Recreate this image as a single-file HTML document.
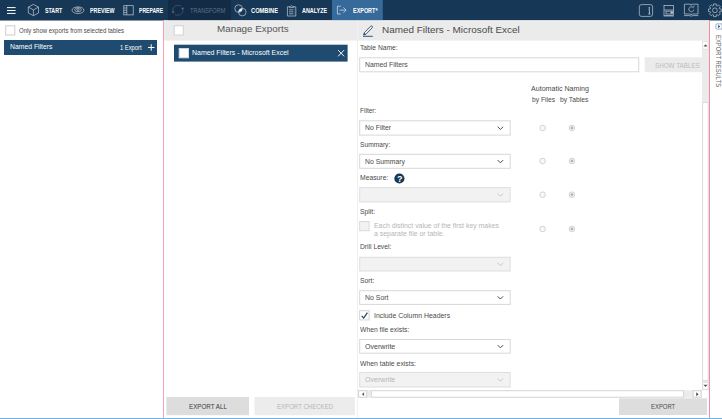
<!DOCTYPE html><html><head><meta charset="utf-8"><title>Export</title><style>
html,body{margin:0;padding:0;background:#fff;}body{width:722px;height:419px;position:relative;overflow:hidden;font-family:"Liberation Sans",sans-serif;}
.t{position:absolute;white-space:nowrap;line-height:12px;height:12px;transform-origin:0 50%;}
svg{display:block;position:absolute;left:0;top:0}
</style></head><body>
<svg width="722" height="419" viewBox="0 0 722 419">
<rect x="0" y="0" width="722.00" height="20.50" fill="#163756" />
<rect x="168" y="0" width="63.00" height="20.50" fill="#132b44" />
<rect x="332" y="0" width="50.80" height="20.50" fill="#366a9a" />
<rect x="5.70" y="25.80" width="9.10" height="9.20" fill="#fff" stroke="#cdcdcd" stroke-width="1" />
<rect x="4" y="40" width="153.00" height="15.00" fill="#204b70" />
<rect x="148" y="47" width="6.40" height="1.00" fill="#fff" />
<rect x="150.7" y="44.3" width="1.00" height="6.40" fill="#fff" />
<rect x="163" y="20.5" width="1.00" height="397.50" fill="#ff9fb5" />
<rect x="164" y="20.5" width="545.00" height="20.10" fill="#ebebeb" />
<rect x="164" y="20.5" width="545.00" height="1.00" fill="#f2f2f2" />
<rect x="174.20" y="25.80" width="9.10" height="9.20" fill="#fff" stroke="#d2d2d2" stroke-width="1" />
<rect x="174" y="44.7" width="173.60" height="16.90" fill="#204b70" />
<rect x="179.20" y="48.60" width="9.30" height="9.20" fill="#fff" stroke="#d8dde3" stroke-width="1" />
<path d="M338.1 50.1 L344.1 56.3 M344.1 50.1 L338.1 56.3" stroke="#fff" stroke-width="0.95" fill="none"/>
<rect x="166.4" y="397" width="82.60" height="18.20" fill="#dddddd" />
<rect x="254.5" y="397" width="100.30" height="18.20" fill="#ececec" />
<rect x="357" y="20.5" width="1.00" height="397.50" fill="#f0f0f0" />
<g transform="translate(362,24)"><path d="M2.2 8.8 L8.6 2.2 Q9.4 1.4 10.2 2.2 Q11 3 10.2 3.8 L3.8 10.4 L1.6 11 Z" fill="none" stroke="#1f4468" stroke-width="0.8"/><path d="M1 12.3 H10.8" stroke="#1f4468" stroke-width="0.9"/><path d="M2.4 8.8 L3.9 10.3 L1.6 11Z" fill="#1f4468"/></g>
<rect x="359.70" y="57.80" width="279.00" height="14.00" fill="#fff" stroke="#d8d8d8" stroke-width="1" />
<rect x="644.7" y="57.3" width="57.30" height="14.90" fill="#ebebeb" />
<rect x="359.70" y="120.80" width="150.50" height="14.30" fill="#fff" stroke="#d8d8d8" stroke-width="1" />
<path d="M497.70 126.75 L500.40 129.45 L503.10 126.75" fill="none" stroke="#4a4a4a" stroke-width="1"/>
<rect x="359.70" y="154.30" width="150.50" height="14.00" fill="#fff" stroke="#d8d8d8" stroke-width="1" />
<path d="M497.70 160.10 L500.40 162.80 L503.10 160.10" fill="none" stroke="#4a4a4a" stroke-width="1"/>
<rect x="359.70" y="187.60" width="150.50" height="14.30" fill="#f2f2f2" stroke="#dedede" stroke-width="1" />
<path d="M497.70 193.55 L500.40 196.25 L503.10 193.55" fill="none" stroke="#c8c8c8" stroke-width="1"/>
<rect x="359.70" y="257.30" width="150.50" height="13.70" fill="#f2f2f2" stroke="#dedede" stroke-width="1" />
<path d="M497.70 262.95 L500.40 265.65 L503.10 262.95" fill="none" stroke="#c8c8c8" stroke-width="1"/>
<rect x="359.70" y="290.70" width="150.50" height="13.70" fill="#fff" stroke="#d8d8d8" stroke-width="1" />
<path d="M497.70 296.35 L500.40 299.05 L503.10 296.35" fill="none" stroke="#4a4a4a" stroke-width="1"/>
<rect x="359.70" y="339.50" width="150.50" height="13.70" fill="#fff" stroke="#d8d8d8" stroke-width="1" />
<path d="M497.70 345.15 L500.40 347.85 L503.10 345.15" fill="none" stroke="#4a4a4a" stroke-width="1"/>
<rect x="359.70" y="372.50" width="150.50" height="14.50" fill="#f2f2f2" stroke="#dedede" stroke-width="1" />
<path d="M497.70 378.55 L500.40 381.25 L503.10 378.55" fill="none" stroke="#c8c8c8" stroke-width="1"/>
<circle cx="542.6" cy="128" r="2.8" fill="#f8f8f8" stroke="#c6c6c6" stroke-width="0.75"/>
<circle cx="571.9" cy="128" r="2.8" fill="#f8f8f8" stroke="#c6c6c6" stroke-width="0.75"/>
<circle cx="571.9" cy="128" r="1.45" fill="#b4b4b4"/>
<circle cx="542.6" cy="161" r="2.8" fill="#f8f8f8" stroke="#c6c6c6" stroke-width="0.75"/>
<circle cx="571.9" cy="161" r="2.8" fill="#f8f8f8" stroke="#c6c6c6" stroke-width="0.75"/>
<circle cx="571.9" cy="161" r="1.45" fill="#b4b4b4"/>
<circle cx="542.6" cy="194.7" r="2.8" fill="#f8f8f8" stroke="#c6c6c6" stroke-width="0.75"/>
<circle cx="571.9" cy="194.7" r="2.8" fill="#f8f8f8" stroke="#c6c6c6" stroke-width="0.75"/>
<circle cx="571.9" cy="194.7" r="1.45" fill="#b4b4b4"/>
<circle cx="542.6" cy="229" r="2.8" fill="#f8f8f8" stroke="#c6c6c6" stroke-width="0.75"/>
<circle cx="571.9" cy="229" r="2.8" fill="#f8f8f8" stroke="#c6c6c6" stroke-width="0.75"/>
<circle cx="571.9" cy="229" r="1.45" fill="#b4b4b4"/>
<circle cx="399.4" cy="178.5" r="5.1" fill="#163756"/>
<rect x="359.70" y="221.50" width="9.40" height="9.20" fill="#f2f2f2" stroke="#d9d9d9" stroke-width="1" />
<rect x="359.70" y="310.70" width="9.40" height="9.20" fill="#fff" stroke="#d2d2d2" stroke-width="1" />
<path d="M361.7 315.9 L363.7 318.1 L367.4 312.7" fill="none" stroke="#1c4066" stroke-width="1.2"/>
<rect x="702" y="40.6" width="7.00" height="349.60" fill="#ebebeb" />
<rect x="702.60" y="41.40" width="5.60" height="7.80" fill="#fff" stroke="#e2e2e2" stroke-width="1" />
<path d="M704.1 46.5 L706.1 44.3 L708.1 46.5Z" fill="#555" transform="translate(-0.6,0)"/>
<rect x="702.60" y="102.50" width="5.60" height="277.90" fill="#fff" stroke="#dcdcdc" stroke-width="1" />
<rect x="702.60" y="382.20" width="5.60" height="7.20" fill="#fff" stroke="#dcdcdc" stroke-width="1" />
<path d="M703.4 384.7 L705.5 387 L707.6 384.7Z" fill="#555"/>
<rect x="358.1" y="390.2" width="343.60" height="7.50" fill="#ececec" />
<rect x="358.60" y="390.70" width="8.10" height="6.50" fill="#fff" stroke="#d2d2d2" stroke-width="1" />
<path d="M364.1 392.3 L361.7 394.2 L364.1 396.1Z" fill="#666"/>
<rect x="371.30" y="390.70" width="312.30" height="6.50" fill="#fff" stroke="#d6d6d6" stroke-width="1" />
<rect x="693.10" y="390.70" width="8.00" height="6.50" fill="#fff" stroke="#d2d2d2" stroke-width="1" />
<path d="M696.2 392.2 L698.7 394.2 L696.2 396.2Z" fill="#555"/>
<rect x="619" y="398.3" width="88.00" height="16.70" fill="#dddddd" />
<rect x="709" y="20.5" width="1.00" height="397.50" fill="#f48ca4" />
<rect x="0" y="418" width="722.00" height="1.00" fill="#72b1e6" />
<g transform="translate(715.5,23.5)"><path d="M1.5 0.4 H6.6 V5.6 H1.5 Q0.4 5.6 0.4 4.5 V1.5 Q0.4 0.4 1.5 0.4Z" fill="none" stroke="#6d8fb3" stroke-width="0.7"/><path d="M2.6 1.6 L4.8 3 L2.6 4.4Z" fill="#1f4468"/></g>
<rect x="7" y="7.1" width="8.60" height="1.00" fill="#fff" />
<rect x="7" y="10" width="8.60" height="1.00" fill="#fff" />
<rect x="7" y="12.9" width="8.60" height="1.00" fill="#fff" />
<g fill="none" stroke="#c3ccd6" stroke-width="0.7" stroke-linejoin="round">
<path d="M33.4 4.4 L38.5 7.1 V13 L33.4 15.7 L28.3 13 V7.1 Z M28.3 7.1 L33.4 9.9 L38.5 7.1 M33.4 9.9 V15.7"/>
<ellipse cx="78" cy="10.2" rx="6" ry="3.3"/><ellipse cx="78" cy="9.7" rx="3.3" ry="2"/><ellipse cx="78" cy="9.5" rx="1.3" ry="0.9"/>
<g stroke-linejoin="miter"><rect x="123.8" y="5.7" width="9.4" height="9.2"/><path d="M126.8 5.7 V14.9 M123.8 8 H126.8 M123.8 10.3 H126.8 M123.8 12.6 H126.8"/></g>
<g stroke="#46607a"><path d="M181 6.2 A5.4 5.4 0 0 0 172.6 11.2 M174.8 14.4 A5.4 5.4 0 0 0 183.2 9.6"/><circle cx="182.6" cy="8.5" r="1.1" fill="#5b7690" stroke="none"/><circle cx="173.2" cy="12" r="0.9" fill="#46607a"/></g>
<circle cx="238.6" cy="8.6" r="3.8"/><circle cx="242.3" cy="12.1" r="3.8"/><path d="M238.9 11.6 Q239.3 9 242 8.8 Q241.8 11.4 238.9 11.6Z" fill="#fff" stroke="#fff" stroke-width="0.6"/>
<path d="M289.6 6.8 H287.4 V16 H295.8 V6.8 H293.6 M289.6 7.6 V6.4 H290.6 Q291.6 4.9 292.6 6.4 H293.6 V7.6 Z M289 9.8 H293 M289 11.8 H293 M289 13.8 H293"/><path d="M293.6 9.8 H294.4 M293.6 11.8 H294.4 M293.6 13.8 H294.4"/>
<g stroke="#dbe5ef"><path d="M340.8 6.2 H337.4 V14 H340.8 M339.6 10.1 H346 M343.4 7.4 L346.1 10.1 L343.4 12.8"/></g>
<rect x="639.3" y="4.6" width="13.3" height="11.8" rx="2.2"/><path d="M649.4 9.6 V14 M648.4 14 H650.4 M648.6 9.6 H649.4" stroke-width="0.9"/><circle cx="649.3" cy="7.9" r="0.5" fill="#c3ccd6"/>
<g stroke-linejoin="miter"><rect x="664" y="5.4" width="9.6" height="10.2"/><path d="M664 10 H673.6"/><rect x="666" y="11.2" width="6.6" height="2.8" stroke-width="0.7"/><rect x="670.6" y="11.6" width="1.6" height="2" fill="#c3ccd6" stroke="none"/><path d="M663.6 16.2 H674" stroke-width="0.5"/></g>
<path d="M684.4 4.2 H690 Q691.2 4.2 691.2 5.4 Q691.2 4.2 692.4 4.2 H698 V14 H692.6 Q691.2 14 691.2 15 Q691.2 14 689.8 14 H684.4 Z M684 15.6 H689.6 Q691.2 16.8 692.8 15.6 H698.4"/><path d="M693.2 7.6 A2.5 2.5 0 1 0 693.8 9.6 M693.2 7.6 L694.3 5.6" />
<path d="M713.61 3.93 L716.19 3.93 L716.32 5.71 L717.14 6.05 L718.49 4.88 L720.32 6.71 L719.15 8.06 L719.49 8.88 L721.27 9.01 L721.27 11.59 L719.49 11.72 L719.15 12.54 L720.32 13.89 L718.49 15.72 L717.14 14.55 L716.32 14.89 L716.19 16.67 L713.61 16.67 L713.48 14.89 L712.66 14.55 L711.31 15.72 L709.48 13.89 L710.65 12.54 L710.31 11.72 L708.53 11.59 L708.53 9.01 L710.31 8.88 L710.65 8.06 L709.48 6.71 L711.31 4.88 L712.66 6.05 L713.48 5.71Z"/><circle cx="714.9" cy="10.3" r="2.4"/>
</g>
</svg>
<div class="t" style="left:396.9px;top:172.6px;font-size:9px;font-weight:700;color:#fff">?</div>
<div id="V" class="t" style="left:718.0px;top:35.3px;font-size:7.6px;color:#686868;transform-origin:0 0;transform:rotate(90deg) scaleX(0.7730) translateY(-6px);">EXPORT RESULTS</div>
<div id="t0" class="t" style="left:45.1px;top:5px;font-size:6.4px;font-weight:700;color:#fff;transform:scaleX(0.8258)">START</div>
<div id="t1" class="t" style="left:89.7px;top:5px;font-size:6.4px;font-weight:700;color:#fff;transform:scaleX(0.8343)">PREVIEW</div>
<div id="t2" class="t" style="left:138.9px;top:5px;font-size:6.4px;font-weight:700;color:#fff;transform:scaleX(0.7922)">PREPARE</div>
<div id="t3" class="t" style="left:190.4px;top:5px;font-size:6.4px;font-weight:400;color:#5b728c;transform:scaleX(0.8744)">TRANSFORM</div>
<div id="t4" class="t" style="left:251.3px;top:5px;font-size:6.4px;font-weight:700;color:#fff;transform:scaleX(0.8944)">COMBINE</div>
<div id="t5" class="t" style="left:301.8px;top:5px;font-size:6.4px;font-weight:700;color:#fff;transform:scaleX(0.8482)">ANALYZE</div>
<div id="t6" class="t" style="left:353px;top:5px;font-size:6.4px;font-weight:700;color:#fff;transform:scaleX(0.8517)">EXPORT*</div>
<div id="t7" class="t" style="left:19px;top:25px;font-size:6.8px;font-weight:400;color:#4a4a4a;transform:scaleX(0.8851)">Only show exports from selected tables</div>
<div id="t8" class="t" style="left:9.5px;top:41px;font-size:7px;font-weight:400;color:#fff;transform:scaleX(0.9753)">Named Filters</div>
<div id="t9" class="t" style="left:120.2px;top:42px;font-size:6.4px;font-weight:400;color:#fff;transform:scaleX(0.9071)">1 Export</div>
<div id="t10" class="t" style="left:216.7px;top:23px;font-size:9.3px;font-weight:400;color:#555;transform:scaleX(1.0576)">Manage Exports</div>
<div id="t11" class="t" style="left:191.7px;top:47px;font-size:7px;font-weight:400;color:#fff;transform:scaleX(0.9933)">Named Filters - Microsoft Excel</div>
<div id="t12" class="t" style="left:381.8px;top:24px;font-size:9.5px;font-weight:400;color:#4a4a4a;transform:scaleX(1.0433)">Named Filters - Microsoft Excel</div>
<div id="t13" class="t" style="left:359.8px;top:42px;font-size:7px;font-weight:400;color:#4a4a4a;transform:scaleX(0.9594)">Table Name:</div>
<div id="t14" class="t" style="left:365px;top:59px;font-size:7px;font-weight:400;color:#4a4a4a;transform:scaleX(0.9821)">Named Filters</div>
<div id="t15" class="t" style="left:654.5px;top:60px;font-size:7.2px;font-weight:400;color:#bcbcbc;transform:scaleX(0.8739)">SHOW TABLES</div>
<div id="t16" class="t" style="left:530.8px;top:83px;font-size:7px;font-weight:400;color:#4a4a4a;transform:scaleX(1.0122)">Automatic Naming</div>
<div id="t17" class="t" style="left:531.7px;top:94px;font-size:7px;font-weight:400;color:#4a4a4a;transform:scaleX(0.9534)">by Files</div>
<div id="t18" class="t" style="left:559.7px;top:94px;font-size:7px;font-weight:400;color:#4a4a4a;transform:scaleX(0.9608)">by Tables</div>
<div id="t19" class="t" style="left:359.7px;top:105px;font-size:7px;font-weight:400;color:#4a4a4a;transform:scaleX(0.9314)">Filter:</div>
<div id="t20" class="t" style="left:365px;top:122px;font-size:7px;font-weight:400;color:#4a4a4a;transform:scaleX(0.9829)">No Filter</div>
<div id="t21" class="t" style="left:359.7px;top:139px;font-size:7px;font-weight:400;color:#4a4a4a;transform:scaleX(0.9497)">Summary:</div>
<div id="t22" class="t" style="left:365px;top:156px;font-size:7px;font-weight:400;color:#4a4a4a;transform:scaleX(0.9793)">No Summary</div>
<div id="t23" class="t" style="left:359.7px;top:172px;font-size:7px;font-weight:400;color:#4a4a4a;transform:scaleX(0.9696)">Measure:</div>
<div id="t24" class="t" style="left:359.7px;top:206px;font-size:7px;font-weight:400;color:#4a4a4a;transform:scaleX(0.9639)">Split:</div>
<div id="t25" class="t" style="left:373.9px;top:220px;font-size:7px;font-weight:400;color:#b6b6b6;transform:scaleX(0.9885)">Each distinct value of the first key makes</div>
<div id="t26" class="t" style="left:373.9px;top:228px;font-size:7px;font-weight:400;color:#b6b6b6;transform:scaleX(0.9899)">a separate file or table.</div>
<div id="t27" class="t" style="left:359.7px;top:241px;font-size:7px;font-weight:400;color:#4a4a4a;transform:scaleX(0.9576)">Drill Level:</div>
<div id="t28" class="t" style="left:359.7px;top:275px;font-size:7px;font-weight:400;color:#4a4a4a;transform:scaleX(0.9664)">Sort:</div>
<div id="t29" class="t" style="left:365px;top:292px;font-size:7px;font-weight:400;color:#4a4a4a;transform:scaleX(0.9901)">No Sort</div>
<div id="t30" class="t" style="left:373.9px;top:310px;font-size:7px;font-weight:400;color:#4a4a4a;transform:scaleX(0.9877)">Include Column Headers</div>
<div id="t31" class="t" style="left:359.6px;top:324px;font-size:7px;font-weight:400;color:#4a4a4a;transform:scaleX(0.9673)">When file exists:</div>
<div id="t32" class="t" style="left:364.7px;top:341px;font-size:7px;font-weight:400;color:#4a4a4a;transform:scaleX(1.0116)">Overwrite</div>
<div id="t33" class="t" style="left:359.6px;top:358px;font-size:7px;font-weight:400;color:#4a4a4a;transform:scaleX(0.9790)">When table exists:</div>
<div id="t34" class="t" style="left:364.7px;top:374px;font-size:7px;font-weight:400;color:#b6b6b6;transform:scaleX(1.0116)">Overwrite</div>
<div id="t35" class="t" style="left:650.8px;top:401px;font-size:7.8px;font-weight:400;color:#4a4a4a;transform:scaleX(0.7581)">EXPORT</div>
<div id="t36" class="t" style="left:189px;top:401px;font-size:7.8px;font-weight:400;color:#3c3c3c;transform:scaleX(0.7997)">EXPORT ALL</div>
<div id="t37" class="t" style="left:276.9px;top:401px;font-size:7.8px;font-weight:400;color:#b6b6b6;transform:scaleX(0.7783)">EXPORT CHECKED</div>
</body></html>
